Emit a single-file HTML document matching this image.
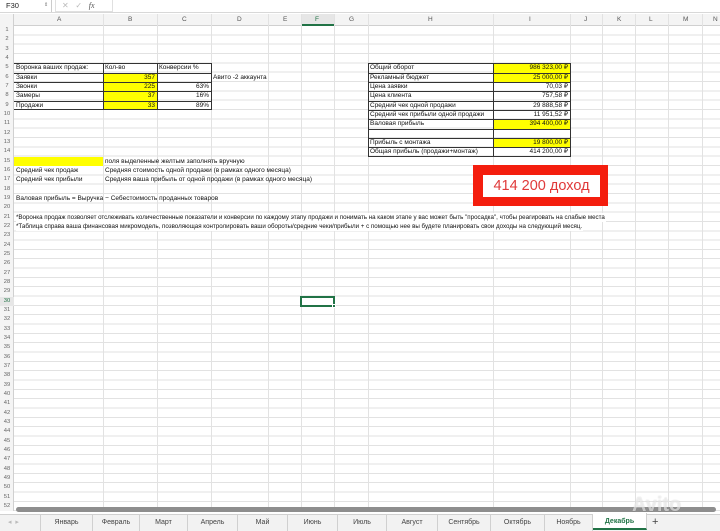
<!DOCTYPE html>
<html><head><meta charset="utf-8"><style>
*{margin:0;padding:0;box-sizing:border-box}
body{width:720px;height:531px;overflow:hidden;background:#fff;font-family:"Liberation Sans",Arial,sans-serif;position:relative}
.a{position:absolute;white-space:nowrap}
.t{position:absolute;white-space:nowrap;font-size:6.5px;line-height:9.33px;height:9.33px;color:#111}
.r{text-align:right}
.y{position:absolute;background:#ffff00}
.vl{position:absolute;top:14px;height:497px;width:1px;background:#e2e2e2}
.rn{position:absolute;left:0;width:14px;font-size:5.8px;color:#666;text-align:center;line-height:9.33px}
.tab{position:absolute;top:514px;height:17px;font-size:7px;color:#444;text-align:center;line-height:17px;border-right:1px solid #d0d0d0}
</style></head><body>
<div class="a" style="left:0;top:0;width:720px;height:13px;background:#fff;border-bottom:1px solid #d8d8d8"></div>
<div class="a" style="left:0;top:0;width:52px;height:12px;border-right:1px solid #ccc;font-size:7.5px;line-height:11px;padding-left:6px;color:#222">F30<span style="position:absolute;left:44px;top:0;font-size:5px;color:#777">⇕</span></div>
<div class="a" style="left:55px;top:0;width:58px;height:12px;border:1px solid #e0e0e0;border-top:none;font-size:8px;line-height:11px;color:#bbb;padding-left:6px">✕&nbsp;&nbsp;&nbsp;✓&nbsp;&nbsp;&nbsp;<i style="color:#555;font-family:'Liberation Serif',serif">fx</i></div>
<div class="a" style="left:0;top:14px;width:720px;height:12px;background:#f4f4f4;border-bottom:1px solid #d0d0d0"></div>
<div class="a" style="left:0;top:14px;width:14px;height:497px;background:#f4f4f4;border-right:1px solid #d0d0d0"></div>
<div class="a" style="left:301px;top:14px;width:33px;height:12px;background:#e6e6e6;border-bottom:2px solid #217346"></div>
<div class="a" style="left:14px;top:26px;width:706px;height:485px;background:repeating-linear-gradient(to bottom,transparent 0,transparent 8.33px,#e2e2e2 8.33px,#e2e2e2 9.33px)"></div>
<div class="vl" style="left:103px"></div><div class="vl" style="left:157px"></div><div class="vl" style="left:211px"></div><div class="vl" style="left:268px"></div><div class="vl" style="left:301px"></div><div class="vl" style="left:334px"></div><div class="vl" style="left:368px"></div><div class="vl" style="left:493px"></div><div class="vl" style="left:570px"></div><div class="vl" style="left:602px"></div><div class="vl" style="left:635px"></div><div class="vl" style="left:668px"></div><div class="vl" style="left:702px"></div>
<div class="a" style="top:14px;height:12px;line-height:12px;font-size:6.5px;color:#555;left:0;width:720px">
<span class="a" style="left:57px">A</span><span class="a" style="left:128px">B</span><span class="a" style="left:182px">C</span><span class="a" style="left:237px">D</span><span class="a" style="left:283px">E</span><span class="a" style="left:315px;color:#217346">F</span><span class="a" style="left:349px">G</span><span class="a" style="left:428px">H</span><span class="a" style="left:529px">I</span><span class="a" style="left:584px">J</span><span class="a" style="left:617px">K</span><span class="a" style="left:649px">L</span><span class="a" style="left:683px">M</span><span class="a" style="left:713px">N</span></div>
<div id="rn"></div>
<script>
var h='';for(var i=1;i<=52;i++){var t=26+(i-1)*9.33;h+='<div class="rn" style="top:'+t+'px;'+(i==30?'color:#217346;background:#e6e6e6':'')+'">'+i+'</div>';}
document.getElementById('rn').innerHTML=h;
</script>
<div class="y" style="left:103px;top:72.6px;width:54px;height:37.3px"></div>
<div class="y" style="left:493px;top:63.3px;width:77px;height:18.7px"></div>
<div class="y" style="left:493px;top:119.3px;width:77px;height:9.3px"></div>
<div class="y" style="left:493px;top:138px;width:77px;height:9.3px"></div>
<div class="y" style="left:14px;top:156.6px;width:89px;height:9.3px"></div>
<div class="a" style="left:103px;top:63.3px;width:1px;height:47px;background:#333"></div>
<div class="a" style="left:157px;top:63.3px;width:1px;height:47px;background:#333"></div>
<div class="a" style="left:14px;top:63.3px;width:198px;height:47px;border:1px solid #333;border-left:none"></div>
<div id="tb1"></div>
<div class="a" style="left:368px;top:63.3px;width:203px;height:94px;border:1px solid #333"></div>
<div class="a" style="left:493px;top:63.3px;width:1px;height:94px;background:#333"></div>
<div id="tb2"></div>
<script>
var s='';for(var i=1;i<5;i++){s+='<div class="a" style="left:14px;top:'+(63.3+i*9.33)+'px;width:198px;height:1px;background:#333"></div>';}
document.getElementById('tb1').innerHTML=s;
s='';for(var i=1;i<10;i++){s+='<div class="a" style="left:368px;top:'+(63.3+i*9.33)+'px;width:203px;height:1px;background:#333"></div>';}
document.getElementById('tb2').innerHTML=s;
</script>
<div class="t" style="left:16px;top:63.3px">Воронка ваших продаж:</div>
<div class="t" style="left:105px;top:63.3px">Кол-во</div>
<div class="t" style="left:159px;top:63.3px">Конверсии %</div>
<div class="t" style="left:16px;top:72.6px">Заявки</div>
<div class="t" style="left:16px;top:82px">Звонки</div>
<div class="t" style="left:16px;top:91.3px">Замеры</div>
<div class="t" style="left:16px;top:100.6px">Продажи</div>
<div class="t r" style="left:103px;width:52px;top:72.6px">357</div>
<div class="t r" style="left:103px;width:52px;top:82px">225</div>
<div class="t r" style="left:103px;width:52px;top:91.3px">37</div>
<div class="t r" style="left:103px;width:52px;top:100.6px">33</div>
<div class="t r" style="left:157px;width:52px;top:82px">63%</div>
<div class="t r" style="left:157px;width:52px;top:91.3px">16%</div>
<div class="t r" style="left:157px;width:52px;top:100.6px">89%</div>
<div class="t" style="left:213px;top:72.6px">Авито -2 аккаунта</div>
<div class="t" style="left:370px;top:63.3px">Общий оборот</div>
<div class="t" style="left:370px;top:72.6px">Рекламный бюджет</div>
<div class="t" style="left:370px;top:82px">Цена заявки</div>
<div class="t" style="left:370px;top:91.3px">Цена клиента</div>
<div class="t" style="left:370px;top:100.6px">Средний чек одной продажи</div>
<div class="t" style="left:370px;top:110px">Средний чек прибыли одной продажи</div>
<div class="t" style="left:370px;top:119.3px">Валовая прибыль</div>
<div class="t" style="left:370px;top:138px">Прибыль с монтажа</div>
<div class="t" style="left:370px;top:147.3px">Общая прибыль (продажи+монтаж)</div>
<div class="t r" style="left:493px;width:75px;top:63.3px">986 323,00 ₽</div>
<div class="t r" style="left:493px;width:75px;top:72.6px">25 000,00 ₽</div>
<div class="t r" style="left:493px;width:75px;top:82px">70,03 ₽</div>
<div class="t r" style="left:493px;width:75px;top:91.3px">757,58 ₽</div>
<div class="t r" style="left:493px;width:75px;top:100.6px">29 888,58 ₽</div>
<div class="t r" style="left:493px;width:75px;top:110px">11 951,52 ₽</div>
<div class="t r" style="left:493px;width:75px;top:119.3px">394 400,00 ₽</div>
<div class="t r" style="left:493px;width:75px;top:138px">19 800,00 ₽</div>
<div class="t r" style="left:493px;width:75px;top:147.3px">414 200,00 ₽</div>
<div class="t" style="left:105px;top:156.6px">поля выделенные желтым заполнять вручную</div>
<div class="t" style="left:16px;top:166px">Средний чек продаж</div>
<div class="t" style="left:105px;top:166px">Средняя стоимость одной продажи (в рамках одного месяца)</div>
<div class="t" style="left:16px;top:175.3px">Средний чек прибыли</div>
<div class="t" style="left:105px;top:175.3px">Средняя ваша прибыль от одной продажи (в рамках одного месяца)</div>
<div class="t" style="left:16px;top:194px">Валовая прибыль = Выручка − Себестоимость проданных товаров</div>
<div class="t" style="left:16px;top:212.6px;background:#fff;padding-right:1px;font-size:6.2px">*Воронка продаж позволяет отслеживать количественные показатели и конверсии по каждому этапу продажи и понимать на каком этапе у вас может быть "просадка", чтобы реагировать на слабые места</div>
<div class="t" style="left:16px;top:222px;background:#fff;padding-right:1px;font-size:6.2px">*Таблица справа ваша финансовая микромодель, позволяющая контролировать ваши обороты/средние чеки/прибыли + с помощью нее вы будете планировать свои доходы на следующий месяц.</div>
<div class="a" style="left:473px;top:165px;width:135px;height:41px;background:#f41e0e"></div>
<div class="a" style="left:483px;top:175px;width:117px;height:22px;background:#fff;color:#e03a3a;font-size:14.5px;line-height:22px;text-align:center">414 200 доход</div>
<div class="a" style="left:300px;top:296px;width:35px;height:11px;border:2px solid #217346"></div>
<div class="a" style="left:332px;top:304px;width:4px;height:4px;background:#217346;border:1px solid #fff"></div>
<div class="a" style="left:14px;top:511px;width:706px;height:3px;background:#fff"></div>
<div class="a" style="left:16px;top:507px;width:700px;height:5px;background:#8e8e8e;border-radius:3px"></div>
<div class="a" style="left:0;top:514px;width:720px;height:17px;background:#f2f2f2;border-top:1px solid #d0d0d0"></div>
<div class="a" style="left:8px;top:514px;font-size:7px;line-height:17px;color:#bbb">◂&nbsp;&nbsp;▸</div>
<div class="tab" style="left:40px;width:53px;border-left:1px solid #d0d0d0">Январь</div>
<div class="tab" style="left:93px;width:47px">Февраль</div>
<div class="tab" style="left:140px;width:48px">Март</div>
<div class="tab" style="left:188px;width:50px">Апрель</div>
<div class="tab" style="left:238px;width:50px">Май</div>
<div class="tab" style="left:288px;width:50px">Июнь</div>
<div class="tab" style="left:338px;width:49px">Июль</div>
<div class="tab" style="left:387px;width:51px">Август</div>
<div class="tab" style="left:438px;width:53px">Сентябрь</div>
<div class="tab" style="left:491px;width:54px">Октябрь</div>
<div class="tab" style="left:545px;width:48px">Ноябрь</div>
<div class="tab" style="left:593px;width:54px;background:#fff;color:#217346;font-weight:bold;border-bottom:2px solid #217346;top:513px">Декабрь</div>
<div class="a" style="left:652px;top:514px;font-size:11px;line-height:17px;color:#444">+</div>
<div class="a" style="left:632px;top:494px;font-size:20px;font-weight:bold;color:rgba(255,255,255,0.6);text-shadow:0 0 1px rgba(0,0,0,0.2)">Avito</div>
</body></html>
